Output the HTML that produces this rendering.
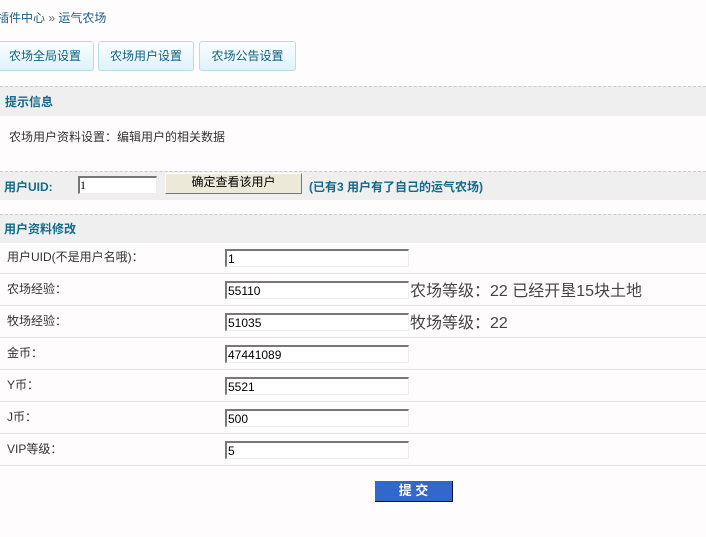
<!DOCTYPE html>
<html><head><meta charset="utf-8"><style>
body{margin:0;width:706px;height:537px;background:#fffcfd;font-family:"Liberation Sans","Noto Sans CJK SC",sans-serif;font-size:12px;color:#333;position:relative;overflow:hidden}
.a{position:absolute;white-space:nowrap}
.btn{position:absolute;top:41px;height:28px;border:1px solid #b8dcea;border-radius:3px;background:linear-gradient(#fbfeff,#dff2fb);color:#0e5f82;line-height:28px;text-align:center;font-size:12px}
.hd{position:absolute;left:0;width:706px;background:#efefef;border-top:1px dashed #ccc}
.b{font-weight:bold;color:#136a8a}
.row{position:absolute;left:0;width:706px;height:31px;border-bottom:1px solid #e4e4e4}
.row .l{position:absolute;left:7px;top:6px}
.inp{position:absolute;left:225px;top:7px;background:#fff;border-top:2px solid #777;border-left:2px solid #777;border-right:1px solid #eee;border-bottom:1px solid #eee;font-family:"Liberation Sans",sans-serif;font-size:12px;line-height:16px;color:#000;padding-left:1px;box-sizing:border-box;height:18px;width:184px}
.ex{position:absolute;left:410px;top:3px;font-size:16px;color:#444}
</style></head><body>
<div class="a" style="left:-3px;top:9px;color:#1b5e7e">插件中心 <span style="color:#666">»</span> 运气农场</div>
<div class="btn" style="left:-4px;width:96px">农场全局设置</div>
<div class="btn" style="left:98px;width:94px">农场用户设置</div>
<div class="btn" style="left:199px;width:95px">农场公告设置</div>
<div class="hd" style="top:86px;height:29px"><span class="a b" style="left:5px;top:6px">提示信息</span></div>
<div class="a" style="left:9px;top:128px">农场用户资料设置：编辑用户的相关数据</div>
<div class="hd" style="top:171px;height:28px">
<span class="a b" style="left:4px;top:6px">用户UID:</span>
<div style="position:absolute;left:78px;top:4px;width:79px;height:18px;background:#fff;border-top:2px solid #777;border-left:2px solid #777;border-right:1px solid #eee;border-bottom:1px solid #eee;box-sizing:border-box;font-family:'Liberation Serif',serif;line-height:15px;color:#000">1</div>
<div style="position:absolute;left:165px;top:1px;width:137px;height:21px;background:#ece9d8;border:1px solid #fff;border-right-color:#777;border-bottom-color:#777;box-sizing:border-box;text-align:center;line-height:17px;color:#000">确定查看该用户</div>
<span class="a b" style="left:309px;top:6px">(已有3 用户有了自己的运气农场)</span>
</div>
<div class="hd" style="top:214px;height:28px"><span class="a b" style="left:4px;top:5px">用户资料修改</span></div>
<div class="row" style="top:242px"><span class="l">用户UID(不是用户名哦)：</span><div class="inp">1</div></div>
<div class="row" style="top:274px"><span class="l">农场经验：</span><div class="inp">55110</div><span class="ex">农场等级：22 已经开垦15块土地</span></div>
<div class="row" style="top:306px"><span class="l">牧场经验：</span><div class="inp">51035</div><span class="ex">牧场等级：22</span></div>
<div class="row" style="top:338px"><span class="l">金币：</span><div class="inp">47441089</div></div>
<div class="row" style="top:370px"><span class="l">Y币：</span><div class="inp">5521</div></div>
<div class="row" style="top:402px"><span class="l">J币：</span><div class="inp">500</div></div>
<div class="row" style="top:434px"><span class="l">VIP等级：</span><div class="inp">5</div></div>
<div class="a" style="left:375px;top:481px;width:78px;height:21px;background:#3267cc;border-right:1px solid #113;border-bottom:1px solid #113;box-sizing:border-box;color:#fff;font-weight:bold;text-align:center;line-height:20px;font-size:13px">提 交</div>
</body></html>
